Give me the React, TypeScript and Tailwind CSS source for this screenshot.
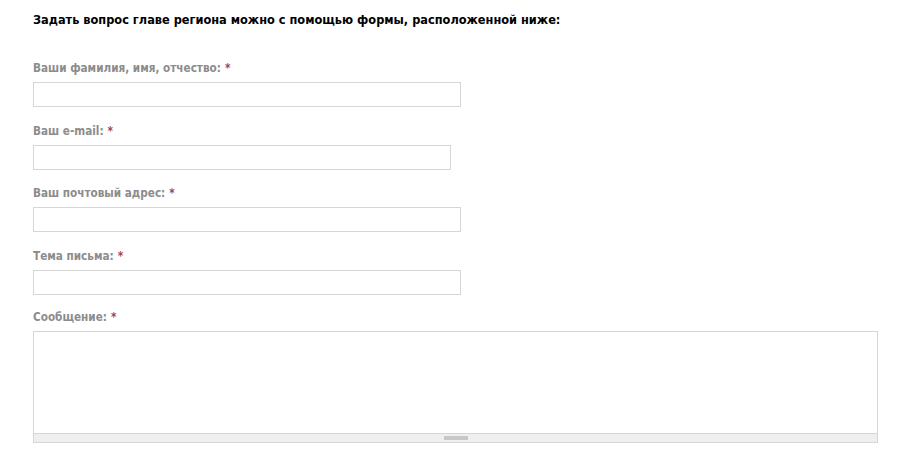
const fields = [
  { label: "Ваши фамилия, имя, отчество:", width: "w-[428px]", mb: "mb-[17px]" },
  { label: "Ваш e-mail:", width: "w-[418px]", mb: "mb-[16px]" },
  { label: "Ваш почтовый адрес:", width: "w-[428px]", mb: "mb-[17px]" },
  { label: "Тема письма:", width: "w-[428px]", mb: "mb-[15px]" },
];

function Label({ text }: { text: string }) {
  return (
    <label className="block text-[11.65px] font-bold leading-[14px] text-[#8c8c8c]">
      {text}
      <span className="ml-[4px] text-[#a3424a]">*</span>
    </label>
  );
}

export default function App() {
  return (
    <div
      className="h-[460px] w-[900px] bg-white pl-[33px] pt-[12px]"
      style={{ fontFamily: '"DejaVu Sans Condensed", "DejaVu Sans", Verdana, sans-serif' }}
    >
      <h2 className="text-[12.65px] font-bold leading-[16px] text-black">
        Задать вопрос главе региона можно с помощью формы, расположенной ниже:
      </h2>
      <form className="mt-[33px] flex flex-col">
        {fields.map((f) => (
          <div key={f.label} className={`${f.mb} flex flex-col gap-[7px]`}>
            <Label text={f.label} />
            <input type="text" className={`h-[25px] ${f.width} border border-[#d6d6d6] bg-white outline-none`} />
          </div>
        ))}
        <div className="flex flex-col gap-[7px]">
          <Label text="Сообщение:" />
          <div className="flex w-[845px] flex-col border border-[#d6d6d6]">
            <textarea className="h-[101px] w-full resize-none bg-white outline-none" />
            <div className="flex h-[9px] justify-center border-t border-[#d6d6d6] bg-[#efefef]">
              <div className="mt-[2px] h-[4px] w-[24px] bg-[#c8c8c8]" />
            </div>
          </div>
        </div>
      </form>
    </div>
  );
}
